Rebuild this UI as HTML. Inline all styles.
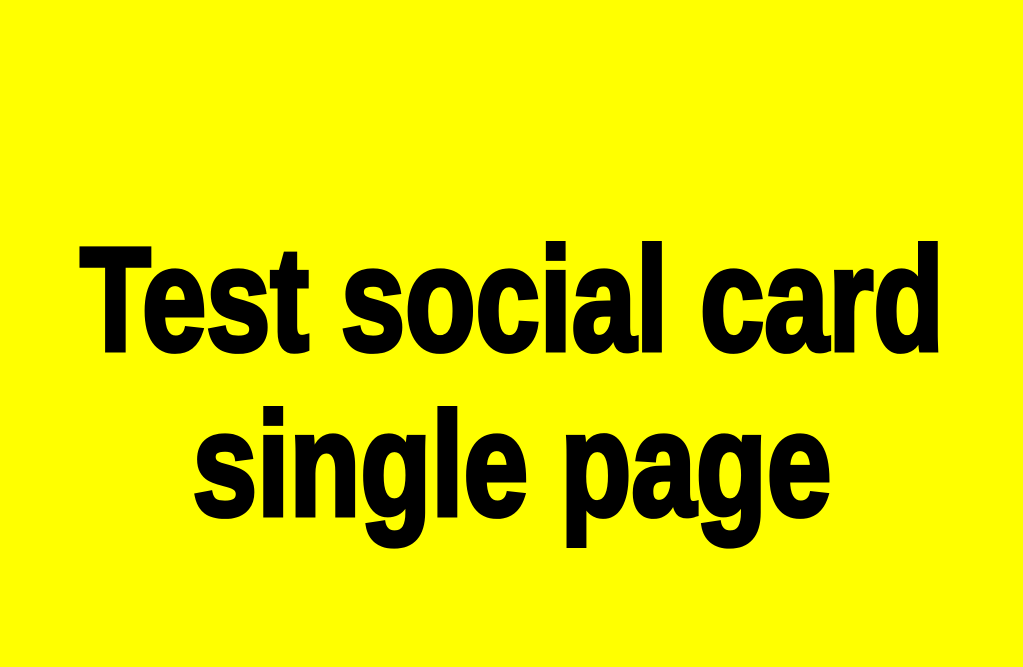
<!DOCTYPE html>
<html><head><meta charset="utf-8"><style>
html,body{margin:0;padding:0;width:1023px;height:667px;background:#ffff00;overflow:hidden}
.l{position:absolute;left:512px;white-space:nowrap;font-family:"Liberation Sans",sans-serif;font-weight:bold;font-size:147px;line-height:165px;color:#000;-webkit-text-stroke:5px #000}
</style></head><body>
<div class="l" style="top:218px;transform:translateX(-50%) scaleX(0.785)">Test social card</div>
<div class="l" style="top:383px;transform:translateX(-50%) scaleX(0.79)">single page</div>
</body></html>
